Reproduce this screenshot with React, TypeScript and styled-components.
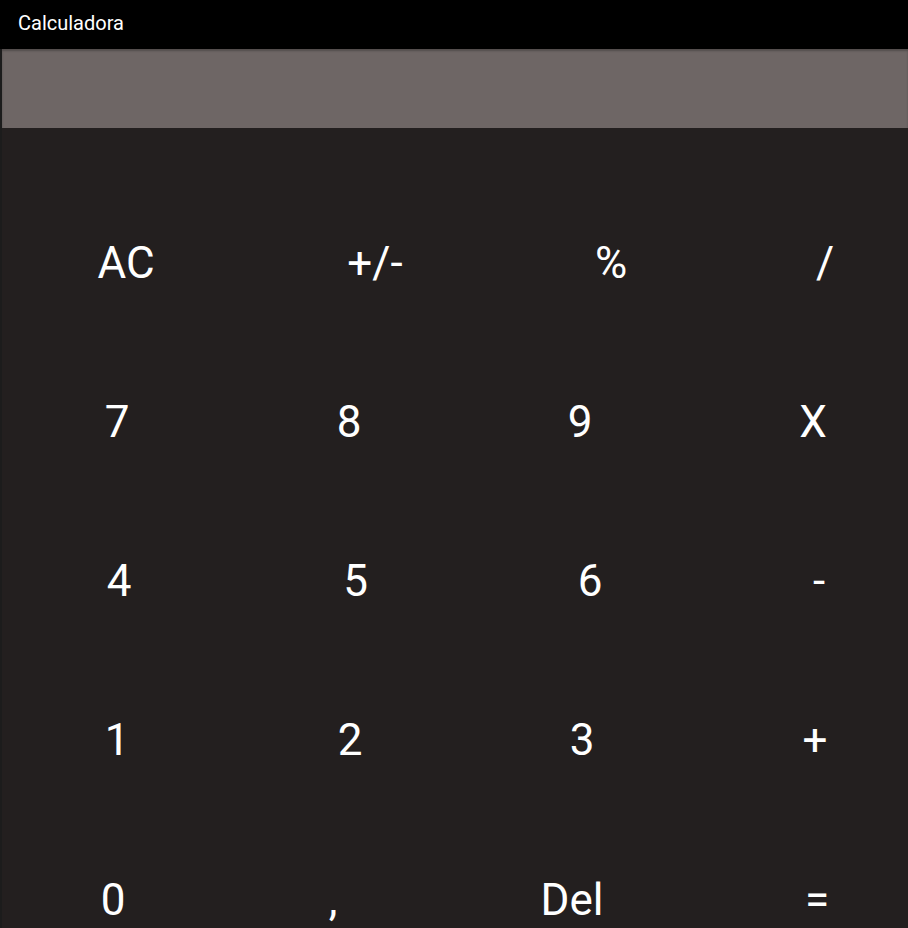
import React, { ReactElement } from 'react'
import styled, { createGlobalStyle } from 'styled-components'

const colorBar = '#000000'
const colorDisplay = '#6e6665'
const colorPad = '#231f1f'
const colorEdge = '#1c1c1c'
const colorText = '#ffffff'

const GlobalStyle = createGlobalStyle`
  html, body {
    margin: 0;
    padding: 0;
    height: 100%;
    background: ${colorEdge};
    overflow: hidden;
  }

  body {
    font-family: Roboto, "Liberation Sans", sans-serif;
  }
`

const Screen = styled.div`
  width: 908px;
  height: 928px;
  display: flex;
  flex-direction: column;
  overflow: hidden;
`

const TitleBar = styled.div`
  height: 49px;
  flex: none;
  display: flex;
  align-items: center;
  padding-left: 18px;
  padding-bottom: 3px;
  box-sizing: border-box;
  background: ${colorBar};
  color: ${colorText};
  font-size: 20px;
`

const Body = styled.div`
  flex: 1;
  margin-left: 2px;
  display: flex;
  flex-direction: column;
  background: ${colorPad};
  overflow: hidden;
`

const Display = styled.div`
  height: 79px;
  flex: none;
  background: ${colorDisplay};
  box-shadow: inset 0 2px 2px rgba(0, 0, 0, 0.25);
`

const Keypad = styled.div`
  display: grid;
  grid-template-columns: repeat(4, 233px);
  grid-auto-rows: 159.25px;
  padding-top: 55px;
`

const Key = styled.button<{ $dx: number }>`
  display: flex;
  align-items: center;
  justify-content: center;
  padding: 0 0 0 ${(p) => Math.max(p.$dx, 0) * 2}px;
  padding-right: ${(p) => Math.max(-p.$dx, 0) * 2}px;
  border: none;
  background: transparent;
  color: ${colorText};
  font-family: Roboto, "Liberation Sans", sans-serif;
  font-size: 44px;
  cursor: pointer;
`

const keys: [string, number][] = [
  ['AC', 7.5],
  ['+/-', 23.5],
  ['%', 26.5],
  ['/', 7.5],
  ['7', -1.5],
  ['8', -2.5],
  ['9', -4.5],
  ['X', -4.5],
  ['4', 0.5],
  ['5', 4],
  ['6', 5.5],
  ['-', 1.5],
  ['1', -1.5],
  ['2', -1.5],
  ['3', -2.5],
  ['+', -2.5],
  ['0', -5.5],
  [',', -18.5],
  ['Del', -12.5],
  ['=', -0.5],
]

export default function App(): ReactElement {
  return (
    <Screen>
      <GlobalStyle />
      <TitleBar>Calculadora</TitleBar>
      <Body>
        <Display />
        <Keypad>
          {keys.map(([label, dx]) => (
            <Key key={label} $dx={dx}>
              {label}
            </Key>
          ))}
        </Keypad>
      </Body>
    </Screen>
  )
}
